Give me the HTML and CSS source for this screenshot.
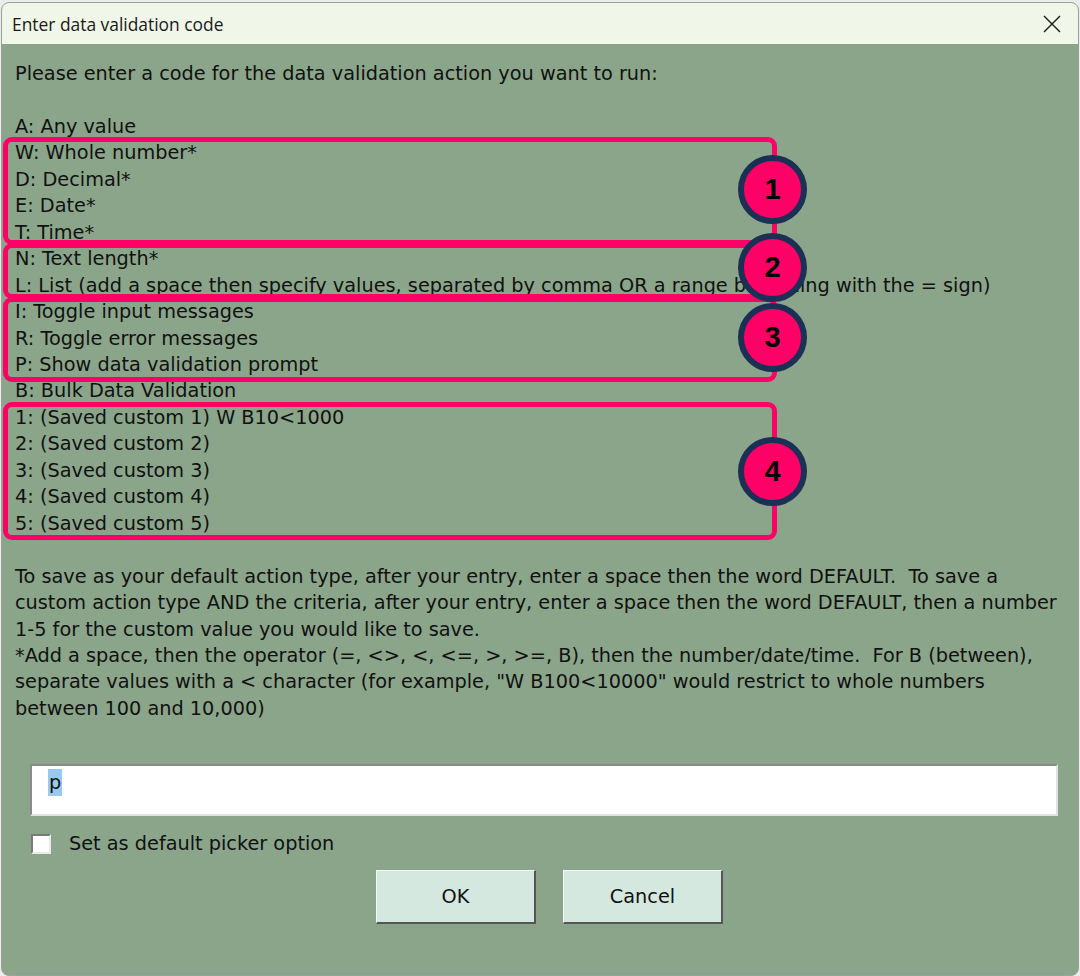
FILE: index.html
```html
<!DOCTYPE html>
<html>
<head>
<meta charset="utf-8">
<link rel="stylesheet" href="styles.css">
</head>
<body>
<div class="window">
  <div class="titlebar">
    <span class="title">Enter data validation code</span>
    <svg class="close" width="18" height="18" viewBox="0 0 18 18"><path d="M1 1L17 17M17 1L1 17" stroke="#1a1a1a" stroke-width="1.4" fill="none"/></svg>
  </div>
  <div class="content">
    <div class="prompt">
      <div>Please enter a code for the data validation action you want to run:</div>
      <div>&nbsp;</div>
      <div>A: Any value</div>
      <div>W: Whole number*</div>
      <div>D: Decimal*</div>
      <div>E: Date*</div>
      <div>T: Time*</div>
      <div>N: Text length*</div>
      <div>L: List (add a space then specify values, separated by comma OR a range beginning with the = sign)</div>
      <div>I: Toggle input messages</div>
      <div>R: Toggle error messages</div>
      <div>P: Show data validation prompt</div>
      <div>B: Bulk Data Validation</div>
      <div>1: (Saved custom 1) W B10&lt;1000</div>
      <div>2: (Saved custom 2)</div>
      <div>3: (Saved custom 3)</div>
      <div>4: (Saved custom 4)</div>
      <div>5: (Saved custom 5)</div>
      <div>&nbsp;</div>
      <div>To save as your default action type, after your entry, enter a space then the word DEFAULT.&nbsp; To save a custom action type AND the criteria, after your entry, enter a space then the word DEFAULT, then a number 1-5 for the custom value you would like to save.</div>
      <div>*Add a space, then the operator (=, &lt;&gt;, &lt;, &lt;=, &gt;, &gt;=, B), then the number/date/time.&nbsp; For B (between), separate values with a &lt; character (for example, "W B100&lt;10000" would restrict to whole numbers between 100 and 10,000)</div>
    </div>
    <div class="input"><span class="sel">p</span></div>
    <div class="check-row">
      <span class="checkbox"></span>
      <span class="check-label">Set as default picker option</span>
    </div>
    <div class="buttons">
      <div class="btn">OK</div>
      <div class="btn">Cancel</div>
    </div>
  </div>

  <div class="box box1"></div>
  <div class="box box2"></div>
  <div class="box box3"></div>
  <div class="box box4"></div>
  <div class="badge b1">1</div>
  <div class="badge b2">2</div>
  <div class="badge b3">3</div>
  <div class="badge b4">4</div>
</div>
</body>
</html>
```
FILE: styles.css
```css
html, body {
  margin: 0;
  padding: 0;
  background: #ececec;
  width: 1080px;
  height: 976px;
  overflow: hidden;
}
.window {
  position: relative;
  margin: 2px 1px 0 1px;
  width: 1076px;
  height: 972px;
  border: 1px solid #9aa39a;
  border-radius: 8px;
  overflow: hidden;
  display: flex;
  flex-direction: column;
  background: #8ba58a;
}
.titlebar {
  height: 41px;
  flex: none;
  background: #f0f6e8;
  display: flex;
  align-items: center;
  justify-content: space-between;
  padding: 0 17px 0 10px;
}
.title {
  font-family: "Open Sans", "Noto Sans", sans-serif;
  font-size: 17.4px;
  color: #1a1a1a;
}
.close { display: block; }
.content {
  flex: 1;
  background: #8ba58a;
  padding: 17px 6px 0 13px;
  font-family: "DejaVu Sans", Verdana, sans-serif;
  font-size: 19.3px;
  color: #111;
}
.prompt div {
  line-height: 26.45px;
}
.input {
  box-sizing: border-box;
  margin: 42px 0 0 15px;
  width: 1028px;
  height: 52px;
  background: #fff;
  border-top: 2px solid #8a8a8a;
  border-left: 2px solid #8a8a8a;
  border-right: 2px solid #e2e2e2;
  border-bottom: 2px solid #e2e2e2;
  display: flex;
  align-items: flex-start;
  padding: 3px 0 0 16px;
}
.sel {
  background: #99c9ef;
  line-height: 27px;
  padding: 0 1px;
}
.check-row {
  display: flex;
  align-items: center;
  margin: 16px 0 0 16px;
  gap: 18px;
}
.checkbox {
  width: 16px;
  height: 16px;
  background: #fff;
  border-top: 2px solid #7a7a7a;
  border-left: 2px solid #7a7a7a;
  border-right: 2px solid #eaeaea;
  border-bottom: 2px solid #eaeaea;
}
.buttons {
  display: flex;
  justify-content: center;
  gap: 27px;
  margin: 15px 0 0 12px;
}
.btn {
  width: 157px;
  height: 51px;
  background: #d5e8e0;
  border-top: 1px solid #f8f8f8;
  border-left: 1px solid #f8f8f8;
  border-right: 2px solid #555;
  border-bottom: 2px solid #555;
  display: flex;
  align-items: center;
  justify-content: center;
}
.box {
  position: absolute;
  border: 5px solid #ff0066;
  border-radius: 9px;
  box-sizing: border-box;
  left: 1px;
  width: 774px;
}
.box1 { top: 134px; height: 108px; }
.box2 { top: 240px; height: 56px; width: 770px; }
.box3 { top: 294px; height: 85px; }
.box4 { top: 399px; height: 138px; }
.badge {
  position: absolute;
  width: 69px;
  height: 69px;
  box-sizing: border-box;
  border: 6px solid #1b3055;
  border-radius: 50%;
  background: #ff0066;
  color: #000;
  font-family: "Liberation Sans", Arial, sans-serif;
  font-weight: bold;
  font-size: 29px;
  display: flex;
  align-items: center;
  justify-content: center;
  left: 736px;
}
.b1 { top: 152px; }
.b2 { top: 230px; }
.b3 { top: 300px; }
.b4 { top: 434px; }
```
